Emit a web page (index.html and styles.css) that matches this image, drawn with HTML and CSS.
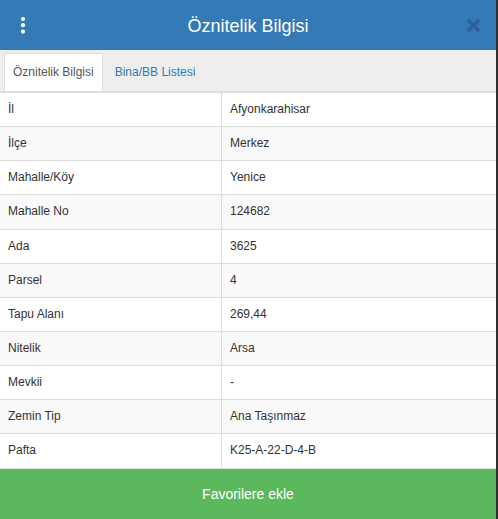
FILE: index.html
```html
<!DOCTYPE html>
<html lang="tr">
<head>
<meta charset="utf-8">
<title>Öznitelik Bilgisi</title>
<link rel="stylesheet" href="styles.css">
</head>
<body>
<div class="panel">
  <header class="header">
    <span class="menu-btn" aria-label="menu">
      <svg width="6" height="18" viewBox="0 0 6 18"><circle cx="3" cy="3" r="2.1" fill="#fff"/><circle cx="3" cy="9.2" r="2.1" fill="#fff"/><circle cx="3" cy="15.6" r="2.1" fill="#fff"/></svg>
    </span>
    <h1 class="title">Öznitelik Bilgisi</h1>
    <span class="close-btn" aria-label="kapat">
      <svg width="13" height="13" viewBox="0 0 13 13"><path d="M2 2 L11 11 M11 2 L2 11" stroke="#2a6297" stroke-width="3.4" stroke-linecap="round"/></svg>
    </span>
  </header>
  <nav class="tabs">
    <span class="tab active">Öznitelik Bilgisi</span>
    <span class="tab">Bina/BB Listesi</span>
  </nav>
  <table class="attr-table">
    <tbody>
      <tr><td>İl</td><td>Afyonkarahisar</td></tr>
      <tr><td>İlçe</td><td>Merkez</td></tr>
      <tr><td>Mahalle/Köy</td><td>Yenice</td></tr>
      <tr><td>Mahalle No</td><td>124682</td></tr>
      <tr><td>Ada</td><td>3625</td></tr>
      <tr><td>Parsel</td><td>4</td></tr>
      <tr><td>Tapu Alanı</td><td>269,44</td></tr>
      <tr><td>Nitelik</td><td>Arsa</td></tr>
      <tr><td>Mevkii</td><td>-</td></tr>
      <tr><td>Zemin Tip</td><td>Ana Taşınmaz</td></tr>
      <tr><td>Pafta</td><td>K25-A-22-D-4-B</td></tr>
    </tbody>
  </table>
  <button class="fav-btn">Favorilere ekle</button>
</div>
</body>
</html>
```
FILE: styles.css
```css
html, body {
  margin: 0;
  padding: 0;
  height: 519px;
  overflow: hidden;
  background: #fff;
}
body {
  font-family: "Liberation Sans", Arial, sans-serif;
  color: #333;
  font-size: 12px;
}
.panel {
  width: 496px;
  border-right: 2px solid #2f2f2f;
  height: 519px;
  display: flex;
  flex-direction: column;
}
.header {
  height: 50px;
  background: #337ab7;
  display: flex;
  align-items: center;
}
.menu-btn {
  display: flex;
  margin-left: 20px;
  width: 6px;
  height: 18px;
}
.title {
  flex: 1;
  margin: 0 0 0 3px;
  text-align: center;
  color: #fff;
  font-weight: normal;
  font-size: 18px;
  line-height: 20px;
  padding-top: 1px;
}
.close-btn {
  display: flex;
  width: 13px;
  height: 13px;
  margin-right: 16px;
  margin-top: 1px;
}
.tabs {
  background: #eee;
  border-bottom: 2px solid #ddd;
  padding: 3px 0 0 4px;
  display: flex;
  height: 38px;
}
.tab {
  padding: 10px 11px;
  line-height: 17px;
  color: #337ab7;
  border: 1px solid transparent;
  border-bottom: none;
}
.tab.active {
  background: #fff;
  color: #555;
  border-color: #ddd;
  padding: 10px 8px;
}
.attr-table {
  width: 100%;
  border-collapse: collapse;
  font-size: 12px;
}
.attr-table td {
  padding: 8px;
  line-height: 17.14px;
  border-bottom: 1px solid #ddd;
  vertical-align: top;
}
.attr-table td:first-child {
  width: 205px;
  border-right: 1px solid #ddd;
}
.attr-table tr:nth-child(even) td {
  background: #f9f9f9;
}
.fav-btn {
  flex: 1;
  border: none;
  margin: 0;
  background: #5cb85c;
  color: #fff;
  font-family: "Liberation Sans", Arial, sans-serif;
  font-size: 14px;
  padding: 0;
  width: 100%;
}
```
